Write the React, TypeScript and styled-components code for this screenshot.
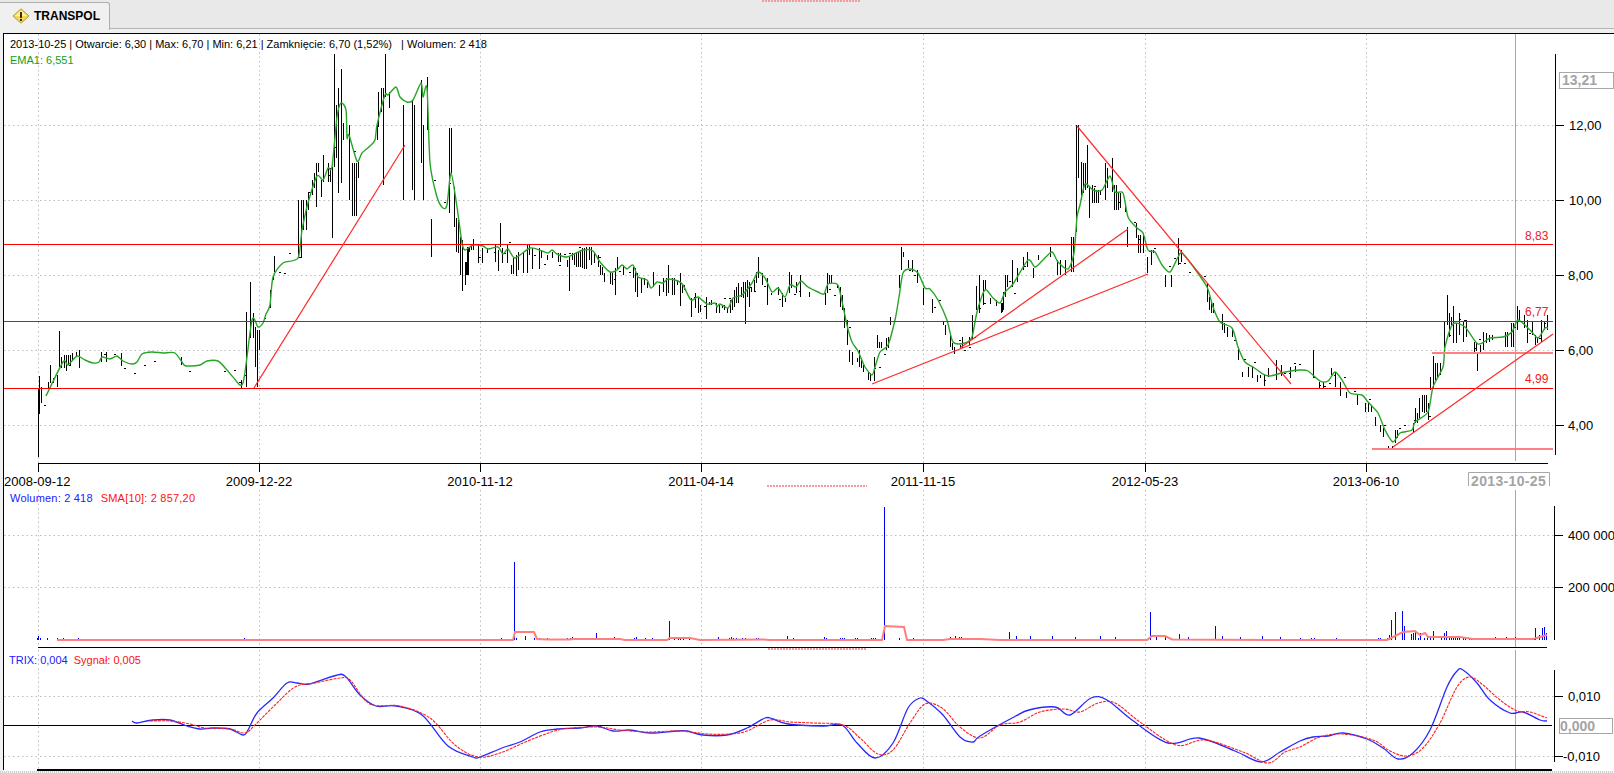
import React from 'react'
import styled, { createGlobalStyle } from 'styled-components'

const FONT = '"Liberation Sans", Arial, sans-serif'
const GRID_X = [38, 259, 480, 701, 923, 1145, 1366]

// page coordinates, read off the screenshot
const EMA = [46,396,63,362,68,365,77,356,85,360,93,363,99,362,102,357,110,359,117,356,123,361,132,364,137,362,142,354,152,352,163,353,175,353,184,365,188,366,200,365,207,361,218,361,227,370,233,377,243,383,252,320,258,327,263,323,266,314,270,305,273,277,283,263,298,258,302,230,308,203,317,176,323,180,328,168,332,167,337,117,341,103,346,110,347,138,349,135,357,161,362,153,370,146,375,140,377,125,385,95,388,95,396,87,400,97,407,102,413,100,421,83,423,97,427,88,430,163,437,197,443,208,447,205,451,173,457,207,462,243,465,250,473,245,483,246,488,249,498,247,503,254,508,249,515,258,530,248,542,251,548,253,552,250,557,254,567,257,583,250,593,251,600,262,610,272,617,270,622,265,627,269,633,265,638,277,647,280,651,288,657,282,663,283,668,279,678,281,683,285,691,300,698,297,707,304,715,303,717,307,720,304,728,308,733,298,742,295,752,283,758,272,765,278,772,292,778,288,785,297,790,285,796,287,801,281,808,287,818,292,824,294,828,284,837,284,840,292,847,325,852,342,858,351,865,367,872,375,875,367,880,352,888,345,895,320,899,297,903,273,910,269,918,273,925,288,930,289,938,300,947,320,953,342,965,343,972,337,977,312,985,290,993,298,1000,303,1005,292,1013,284,1028,260,1035,267,1043,260,1052,252,1058,262,1068,269,1074,253,1077,217,1080,205,1085,184,1093,190,1102,190,1110,176,1115,192,1123,193,1128,217,1137,228,1143,233,1148,250,1155,252,1162,265,1170,272,1178,257,1182,253,1192,265,1207,287,1213,307,1220,322,1232,328,1238,347,1245,362,1253,367,1263,374,1270,376,1285,372,1300,370,1308,371,1320,381,1328,381,1335,372,1342,380,1350,393,1362,395,1368,402,1378,413,1385,430,1393,442,1400,433,1412,430,1415,422,1428,412,1433,387,1443,367,1445,347,1453,324,1465,327,1478,344,1490,338,1503,337,1512,332,1518,320,1530,330,1538,338,1545,328,1548,328]

const BLUE = [132,721,137,723,153,720,170,720,187,726,200,729,213,728,230,729,243,735,248,730,257,713,273,698,287,683,297,683,309,684,334,676,345,676,360,695,376,706,396,706,422,715,448,746,473,757,480,757,502,748,520,742,540,732,557,729,580,728,597,726,613,731,630,730,650,733,677,731,687,731,703,735,727,735,747,728,765,718,773,719,788,724,823,726,842,725,857,743,875,758,893,743,908,708,920,698,928,702,943,715,960,737,973,742,980,736,1014,717,1029,710,1055,707,1070,715,1091,698,1107,700,1132,720,1168,743,1199,738,1235,751,1261,762,1280,752,1300,741,1313,737,1328,736,1343,733,1367,739,1383,748,1398,759,1413,753,1430,730,1447,687,1457,671,1463,670,1477,683,1490,700,1510,713,1523,712,1540,720,1547,721]
const SIGNAL = [150,721,170,721,190,724,205,728,230,729,245,733,255,725,275,705,295,687,315,683,340,678,350,680,370,704,400,706,430,718,455,745,478,757,500,753,523,743,543,735,563,729,597,727,620,730,647,732,680,731,707,734,730,734,747,731,770,720,790,722,813,723,843,725,860,738,878,754,893,750,910,723,925,704,942,708,960,727,980,738,1000,725,1020,722,1040,712,1064,709,1080,712,1098,703,1115,703,1140,722,1176,745,1205,740,1243,752,1268,763,1285,752,1300,747,1320,737,1343,734,1373,740,1390,751,1407,756,1423,748,1440,723,1457,687,1470,677,1483,685,1500,700,1517,711,1530,712,1547,718]

// bar lists are x,top,bottom triples measured on 3x crops of the reference
const BAR_CROPS: [number, number, number[]][] = [
  [30, 300, [23,265,470,28,228,342,34,262,308,55,245,265,61,195,250,70,235,250,82,225,262,88,93,200,94,170,205,103,165,205,109,165,213,115,165,195,121,165,195,127,158,180,139,155,170,148,150,203,214,155,185,229,155,185,274,160,197,454,172,195,634,240,265]],
  [230, 40, [47,815,1040,61,725,895,68,820,895,75,860,980,80,870,1040,88,870,930,121,750,800,128,705,720,133,648,695,205,480,655,213,480,655,220,480,570,227,480,570,233,455,510,246,420,465,251,400,445,259,370,500,265,370,395,273,420,470,280,345,425,295,370,425,300,385,425,307,380,593,313,43,380,319,195,355,325,145,458,333,87,430,340,250,300,358,255,480,367,370,527,373,370,527,379,370,527,385,365,415,440,255,300,445,155,260,452,145,215,460,145,435,465,43,170,477,155,205,520,195,480,545,180,450,552,195,480,572,120,370,580,255,480,592,110,270,604,537,650,658,265,520,664,265,400,672,440,560,678,535,635,684,540,640,690,590,705,697,600,750,707,665,705,713,620,705]],
  [450, 210, [30,120,195,37,195,242,46,155,225,52,110,195,58,110,125,64,105,120,70,87,120,85,105,160,97,115,160,112,115,130,136,105,155,144,120,183,151,40,110,157,115,160,172,105,158,184,165,193,190,145,193,199,135,197,205,125,180,219,125,190,232,105,190,238,105,135,247,115,178,268,115,178,274,120,145,292,135,150,306,125,145,325,130,155,331,130,155,352,150,170,358,140,242,367,130,150,373,130,165,379,125,170,385,125,170,391,120,170,397,115,175,403,115,178,409,110,178,418,110,150,424,110,165,433,125,160,445,135,170,451,165,195,457,170,195,463,190,215,481,190,222,487,190,225,496,175,255,502,140,180,520,165,195,550,170,205,556,175,245,562,190,262,574,205,250,583,205,225,592,215,235,610,185,230,628,225,258,640,205,245,649,205,258,655,165,250,667,205,255,673,205,255,682,210,225,691,190,288,697,225,250,703,225,240,724,265,320,736,250,295,745,260,310,751,285,305,769,260,328,778,275,285,784,270,285,797,280,308,806,285,308,815,285,295,821,285,300,830,295,310,839,270,308,845,265,300,851,240,290,857,230,280,863,220,280,872,230,260,878,215,265,884,215,342,890,210,260,896,215,290,902,230,245,911,210,245,917,185,220,923,140,205,935,190,225,950,205,285,962,250,255,983,230,255,995,250,290,1004,265,275,1016,185,250,1022,195,235,1037,215,250,1049,195,260,1076,245,262,1124,250,285,1130,190,250,1136,195,220,1142,195,220,1160,225,235,1169,230,290,1175,255,300,1181,295,355,1190,330,390]],
  [840, 230, [11,240,295,20,295,345,26,360,395,37,365,405,50,385,395,58,360,410,64,390,415,70,405,425,85,425,450,91,430,452,103,380,452,112,315,355,118,335,355,124,335,355,139,325,360,145,320,355,151,262,285,178,135,175,184,50,120,190,65,80,205,90,115,217,90,125,232,120,158,250,175,225,277,208,248,310,275,285,316,285,315,331,315,350,337,340,360,343,350,372,361,345,358,367,322,355,388,320,345,397,255,330,409,168,240,418,135,248,430,150,225,436,150,180,451,205,222,469,210,228,484,220,250,490,185,240]],
  [1000, 110, [5,578,605,14,495,560,21,495,530,37,450,530,50,475,515,68,440,480,82,425,470,98,475,505,115,435,450,150,410,440,170,450,495,180,450,495,195,450,495,213,380,485,218,380,485,228,45,365,235,45,205,244,155,270,250,160,250,256,160,240,262,105,235,268,230,325,277,225,280,283,235,280,289,240,280,295,240,280,301,240,255,316,160,270,322,175,235,337,145,245,343,225,300,349,225,300,355,250,300,361,250,295,376,285,305,382,350,412,409,338,385,415,375,428,421,375,428,430,368,430,442,440,490,452,420,465,458,420,430,496,495,530,513,495,530,535,385,465,543,420,455,622,518,575,628,560,600,634,575,610,640,580,610,667,612,660,673,640,670,682,650,680,697,655,680,715,710,750,727,785,800,745,770,800,757,770,805,770,795,815,779,795,805,793,795,828,803,775,800]],
  [1270, 330, [18,90,150,33,105,138,60,110,145,75,108,125]],
  [1300, 280, [40,210,295,58,305,325,70,305,325,94,265,285,106,275,320,121,305,348,139,335,355,172,345,375,195,370,395,204,370,395,213,375,395,225,410,437,240,435,455,249,445,470,265,497,510,277,497,510,286,450,490,292,450,475,340,430,455,346,385,430,352,400,430,358,355,415,367,345,395,373,345,400,379,345,395,385,370,420,391,290,330,400,228,325,406,250,300,412,250,295,421,250,285,433,125,215,440,45,135,446,100,170,452,110,135,459,78,190,467,130,190,477,100,165,489,125,185,498,120,170,522,185,215,528,185,212,532,215,272,540,195,215,549,155,210,558,160,190,567,165,185,576,165,180,591,170,175,615,155,200,621,155,200,633,130,200,640,130,200,652,78,150,658,90,125,672,105,145,680,120,188,697,125,165,706,165,195,712,170,190,724,120,185,733,125,150,742,105,150]],
]

const VOLUME_CROPS: [number, number, number[]][] = [
  [480, 500, [64,414,103,186,109,414,136,408,163,414,178,415,202,415,262,414,271,414,277,411,316,414,322,414,331,414,349,400,355,414,364,414,403,411,409,414,463,414,469,411,496,414,517,414,568,363,583,414,595,414,601,414,610,414,628,414,715,411,748,414,754,411,760,414,769,414,787,414,796,414,829,414,835,414,922,408,940,414,1033,411,1039,414,1081,414,1087,414,1093,414,1126,414,1132,414,1174,414,1180,414,1186,414,1213,20,1258,414,1300,414,1411,411,1420,414,1426,408,1432,414,1438,411,1444,411,1471,414,1498,414]],
  [1300, 580, [0,174,33,174,42,174,108,174,235,174,241,174,262,175,268,165,274,120,286,97,307,93,313,138,334,162,340,160,346,152,355,174,361,158,373,174,382,174,391,174,400,153,424,170,432,158,438,154,448,174,454,174,460,174,466,174,472,174,478,172,490,174,496,174,508,175,514,175,523,175,538,174,547,174,586,172,601,174,607,174,619,172,631,174,637,174,646,172,655,174,664,174,670,174,679,174,703,174,706,144,718,165,727,144,733,141,739,160]],
]
const VOLUME_EXTRA = [[37,638],[38,636],[40,638],[47,638],[57,638],[63,638],[78,638],[244,638],[1009,632],[1016,636],[1030,636],[1052,636],[1075,637],[1100,636],[1115,637],[1150,612],[1156,636],[1165,636],[1179,634],[1188,637],[1215,626],[1222,636],[1240,637],[1262,636],[1280,637]]

const SMA = [57,640,513,640,515,632,534,632,537,639,548,639.5,570,639.5,573,639,620,639,625,640,667,640,670,638,690,638,700,640,763,639.5,770,640,882,640,885,626,904,627,907,640,943,640,950,639,980,639,1000,640,1147,640,1152,636,1165,636,1172,639.5,1300,640,1387,640,1397,635,1403,632,1415,631,1420,635,1425,633,1428,637,1440,637,1460,637,1473,639,1533,639,1547,635]

const HORIZONTAL_PRICE = [125, 200, 275, 350, 425]

function cropBars() {
  const out: [number, number, number][] = []
  BAR_CROPS.forEach(([ox, oy, list]) => {
    for (let i = 0; i < list.length; i += 3) {
      out.push([Math.round(ox + list[i] / 3), Math.round(oy + list[i + 1] / 3), Math.round(oy + list[i + 2] / 3)])
    }
  })
  return out
}

function volumeBars() {
  const out: number[][] = [...VOLUME_EXTRA]
  VOLUME_CROPS.forEach(([ox, oy, list]) => {
    for (let i = 0; i < list.length; i += 2) {
      out.push([Math.round(ox + list[i] / 3), Math.round(oy + list[i + 1] / 3)])
    }
  })
  return out
}

function emaAt(x: number) {
  for (let i = 2; i < EMA.length; i += 2) {
    if (EMA[i] >= x) {
      const t = (x - EMA[i - 2]) / (EMA[i] - EMA[i - 2] || 1)
      return EMA[i - 1] + (EMA[i + 1] - EMA[i - 1]) * t
    }
  }
  return 330
}

// the thin sessions: high equals low, so they show up as tiny dashes next to the average
function dots() {
  let seed = 17
  const out: number[][] = []
  for (let x = 44; x < 1546; x += 5) {
    seed = (seed * 137 + 59) % 1009
    if (seed % 5 < 2) out.push([x, Math.round(emaAt(x) + (seed % 21) - 8)])
  }
  return out
}

const pts = (a: number[]) => {
  const s: string[] = []
  for (let i = 0; i < a.length; i += 2) s.push(`${a[i]},${a[i + 1]}`)
  return s.join(' ')
}

// catmull-rom through the measured points, the originals are smooth curves
function curve(a: number[], k = 6) {
  const at = (i: number) => Math.max(0, Math.min(a.length - 2, i))
  let d = `M${a[0]} ${a[1]}`
  for (let i = 0; i < a.length - 2; i += 2) {
    const p0 = at(i - 2)
    const p2 = at(i + 2)
    const p3 = at(i + 4)
    const c1x = a[i] + (a[p2] - a[p0]) / k
    const c1y = a[i + 1] + (a[p2 + 1] - a[p0 + 1]) / k
    const c2x = a[p2] - (a[p3] - a[i]) / k
    const c2y = a[p2 + 1] - (a[p3 + 1] - a[i + 1]) / k
    d += `C${c1x.toFixed(1)} ${c1y.toFixed(1)} ${c2x.toFixed(1)} ${c2y.toFixed(1)} ${a[p2]} ${a[p2 + 1]}`
  }
  return d
}

const GlobalStyle = createGlobalStyle`
  html, body { margin: 0; padding: 0; background: #fff; overflow: hidden; }
  body { font-family: ${FONT}; }
`

const Page = styled.div`
  position: relative;
  width: 1614px;
  height: 773px;
  background: #fff;
  overflow: hidden;
`

const TabStrip = styled.div`
  position: absolute;
  inset: 0 0 auto 0;
  height: 28px;
  background: #e9e9e9;
  border-bottom: 1px solid #b4b4b4;
`

const SubStrip = styled.div`
  position: absolute;
  top: 29px;
  left: 0;
  right: 0;
  height: 4px;
  background: #f0f0f0;
`

const LeftGutter = styled.div`
  position: absolute;
  top: 33px;
  left: 0;
  bottom: 0;
  width: 3px;
  background: #f0f0f0;
`

const Splitter = styled.div<{ $top: number; $left: number; $width: number }>`
  position: absolute;
  top: ${p => p.$top}px;
  left: ${p => p.$left}px;
  width: ${p => p.$width}px;
  height: 2px;
  background: repeating-linear-gradient(90deg, #f49a9a 0 2px, transparent 2px 3px);
`

const Tab = styled.div`
  position: absolute;
  top: 2px;
  left: 0;
  width: 110px;
  height: 28px;
  box-sizing: border-box;
  display: flex;
  align-items: center;
  padding: 0 0 2px 12px;
  gap: 4px;
  background: #f0f0f0;
  border: 1px solid #aeaeae;
  border-bottom: none;
  border-left: none;
  border-radius: 0 3px 0 0;
`

const TabTitle = styled.span`
  font: bold 12px ${FONT};
  color: #000;
`

const ChartFrame = styled.div`
  position: absolute;
  top: 33px;
  left: 3px;
  right: 0;
  height: 737px;
  box-sizing: border-box;
  border-top: 1px solid #000;
  border-left: 1px solid #000;
`

const BottomEdge = styled.div`
  position: absolute;
  left: 0;
  right: 0;
  top: 771px;
  height: 2px;
  background: repeating-linear-gradient(90deg, #cfcfcf 0 1px, #f4f4f4 1px 2px);
`

const Panel = styled.svg<{ $top: number; $height: number }>`
  position: absolute;
  left: 0;
  top: ${p => p.$top}px;
  width: 1614px;
  height: ${p => p.$height}px;
  display: block;
`

const Legend = styled.div<{ $top: number; $left?: number; $spacing?: number }>`
  position: absolute;
  top: ${p => p.$top}px;
  left: ${p => p.$left ?? 10}px;
  font: 11px/14px ${FONT};
  letter-spacing: ${p => p.$spacing ?? 0}px;
  white-space: pre;
  color: #000;
`

const Series = styled.span<{ $color: string; $gap?: number }>`
  color: ${p => p.$color};
  margin-right: ${p => p.$gap ?? 0}px;
`

const AxisText = styled.text`
  font: 13px ${FONT};
  fill: #000;
`

const LevelText = styled.text`
  font: 12px ${FONT};
  fill: #f02020;
`

const BoxText = styled.text`
  font: bold 14px ${FONT};
  fill: #a4a4a4;
`

const GridH = ({ y, to = 1555 }: { y: number; to?: number }) => (
  <line x1={4} x2={to} y1={y + 0.5} y2={y + 0.5} stroke="#bdbdbd" strokeDasharray="1.5 3" />
)

const GridV = ({ y1, y2 }: { y1: number; y2: number }) => (
  <>
    {GRID_X.map(x => (
      <line key={x} x1={x + 0.5} x2={x + 0.5} y1={y1} y2={y2} stroke="#bdbdbd" strokeDasharray="1.5 3" />
    ))}
  </>
)

const Tick = ({ x, y, w = 9 }: { x: number; y: number; w?: number }) => (
  <line x1={x} x2={x + w} y1={y + 0.5} y2={y + 0.5} stroke="#000" />
)

const Cursor = ({ y1, y2 }: { y1: number; y2: number }) => (
  <line x1={1515.5} x2={1515.5} y1={y1} y2={y2} stroke="#a6a6a6" />
)

const WarningIcon = () => (
  <svg width="18" height="16" viewBox="0 0 18 16">
    <path d="M9 .8 17 8l-8 7.2L1 8Z" fill="#f8d64e" stroke="#a89a50" strokeLinejoin="round" />
    <path d="M9 2.4 15 8H3Z" fill="#fff1a8" />
    <rect x="8" y="4" width="2" height="6" fill="#3a3000" />
    <rect x="8" y="11" width="2" height="2" fill="#3a3000" />
  </svg>
)

function PricePanel() {
  const dates = ['2008-09-12', '2009-12-22', '2010-11-12', '2011-04-14', '2011-11-15', '2012-05-23', '2013-06-10']
  return (
    <Panel $top={33} $height={457} viewBox="0 33 1614 457">
      {HORIZONTAL_PRICE.map(y => <GridH key={y} y={y} />)}
      <GridV y1={34} y2={463} />
      <Cursor y1={34} y2={461} />

      {dots().map(([x, y], i) => <rect key={i} x={x} y={y} width={2} height={1} fill="#000" />)}
      {cropBars().map(([x, a, b], i) => <rect key={i} x={x} y={a} width={1} height={b - a} fill="#000" />)}

      <path d={curve(EMA, 8)} fill="none" stroke="#27a527" strokeWidth={1.4} strokeLinejoin="round" />

      <line x1={4} x2={1553} y1={244.5} y2={244.5} stroke="#f00" />
      <line x1={4} x2={1553} y1={321.5} y2={321.5} stroke="#f00" />
      <line x1={4} x2={1553} y1={388.5} y2={388.5} stroke="#f00" />
      <line x1={1432} x2={1553} y1={353} y2={353} stroke="#ff8080" strokeWidth={2} />
      <line x1={1372} x2={1553} y1={449} y2={449} stroke="#ff8080" strokeWidth={2} />
      <g stroke="#ff2a2a" strokeWidth={1.2}>
        <line x1={254} y1={388} x2={405} y2={145} />
        <line x1={872} y1={384} x2={1148} y2={274} />
        <line x1={960} y1={348} x2={1128} y2={229} />
        <line x1={1077} y1={126} x2={1291} y2={384} />
        <line x1={1393} y1={447} x2={1553} y2={334} />
      </g>
      <LevelText x={1525} y={240}>8,83</LevelText>
      <LevelText x={1525} y={316}>6,77</LevelText>
      <LevelText x={1525} y={383}>4,99</LevelText>

      <line x1={1555.5} x2={1555.5} y1={54} y2={455} stroke="#000" />
      {[['12,00', 125], ['10,00', 200], ['8,00', 275], ['6,00', 350], ['4,00', 425]].map(([t, y]) => (
        <g key={t}>
          <Tick x={1555} y={y as number} />
          <AxisText x={t === '12,00' || t === '10,00' ? 1569 : 1568} y={(y as number) + 5}>{t}</AxisText>
        </g>
      ))}
      <rect x={1559.5} y={72.5} width={54} height={16} fill="#fff" stroke="#a8a8a8" />
      <BoxText x={1562} y={85}>13,21</BoxText>

      <line x1={38} x2={1548} y1={463.5} y2={463.5} stroke="#000" />
      {GRID_X.map((x, i) => (
        <g key={x}>
          <line x1={x + 0.5} x2={x + 0.5} y1={463} y2={472} stroke="#000" />
          <AxisText x={i === 0 ? 4 : x} y={486} textAnchor={i === 0 ? 'start' : 'middle'}>{dates[i]}</AxisText>
        </g>
      ))}
      <path d="M1468.5 486V472.5H1549.5V486" fill="#fff" stroke="#a8a8a8" />
      <BoxText x={1471} y={486} letterSpacing={0.35}>2013-10-25</BoxText>
    </Panel>
  )
}

function VolumePanel() {
  return (
    <Panel $top={490} $height={160} viewBox="0 490 1614 160">
      <GridH y={535} />
      <GridH y={587} />
      <GridV y1={490} y2={647} />
      <Cursor y1={490} y2={647} />
      {volumeBars().map(([x, y], i) => <rect key={i} x={x} y={y} width={1} height={640 - y} fill="#0000f0" />)}
      <polyline points={pts(SMA)} fill="none" stroke="#ff7f7f" strokeWidth={2} />
      <line x1={38} x2={1547} y1={647.5} y2={647.5} stroke="#000" />
      <line x1={1554.5} x2={1554.5} y1={506} y2={640} stroke="#000" />
      <Tick x={1554} y={535} />
      <Tick x={1554} y={587} />
      <AxisText x={1568} y={540}>400 000</AxisText>
      <AxisText x={1568} y={592}>200 000</AxisText>
    </Panel>
  )
}

function TrixPanel() {
  return (
    <Panel $top={650} $height={123} viewBox="0 650 1614 123">
      <GridH y={696} />
      <GridH y={756} />
      <GridV y1={650} y2={770} />
      <Cursor y1={650} y2={770} />
      <line x1={4} x2={1552} y1={725.5} y2={725.5} stroke="#000" />
      <path d={curve(BLUE)} fill="none" stroke="#2828ff" strokeWidth={1.3} strokeLinejoin="round" />
      <path d={curve(SIGNAL)} fill="none" stroke="#ff2020" strokeWidth={1.1} strokeDasharray="3 1" />
      <line x1={1554.5} x2={1554.5} y1={670} y2={762} stroke="#000" />
      <Tick x={1554} y={696} />
      <Tick x={1554} y={756} />
      <AxisText x={1568} y={701}>0,010</AxisText>
      <AxisText x={1563} y={761}>-0,010</AxisText>
      <rect x={1559.5} y={718.5} width={53} height={15} fill="#fff" stroke="#a8a8a8" />
      <BoxText x={1560} y={731}>0,000</BoxText>
      <line x1={37} x2={1552} y1={770} y2={770} stroke="#000" strokeWidth={2} />
    </Panel>
  )
}

export default function App() {
  return (
    <Page>
      <GlobalStyle />
      <TabStrip />
      <SubStrip />
      <LeftGutter />
      <Tab>
        <WarningIcon />
        <TabTitle>TRANSPOL</TabTitle>
      </Tab>
      <Splitter $top={0} $left={762} $width={98} />
      <ChartFrame />
      <BottomEdge />
      <PricePanel />
      <VolumePanel />
      <TrixPanel />
      <Splitter $top={485} $left={767} $width={100} />
      <Splitter $top={648} $left={768} $width={99} />
      <Legend $top={37}>2013-10-25 | Otwarcie: 6,30 | Max: 6,70 | Min: 6,21 | Zamknięcie: 6,70 (1,52%)   | Wolumen: 2 418</Legend>
      <Legend $top={53}><Series $color="#14a014">EMA1: 6,551</Series></Legend>
      <Legend $top={491} $spacing={0.2}>
        <Series $color="#2020ff" $gap={8}>Wolumen: 2 418</Series>
        <Series $color="#ff1010">SMA[10]: 2 857,20</Series>
      </Legend>
      <Legend $top={653} $left={9}>
        <Series $color="#2020ff" $gap={6}>TRIX: 0,004</Series>
        <Series $color="#ff1010">Sygnał: 0,005</Series>
      </Legend>
    </Page>
  )
}
